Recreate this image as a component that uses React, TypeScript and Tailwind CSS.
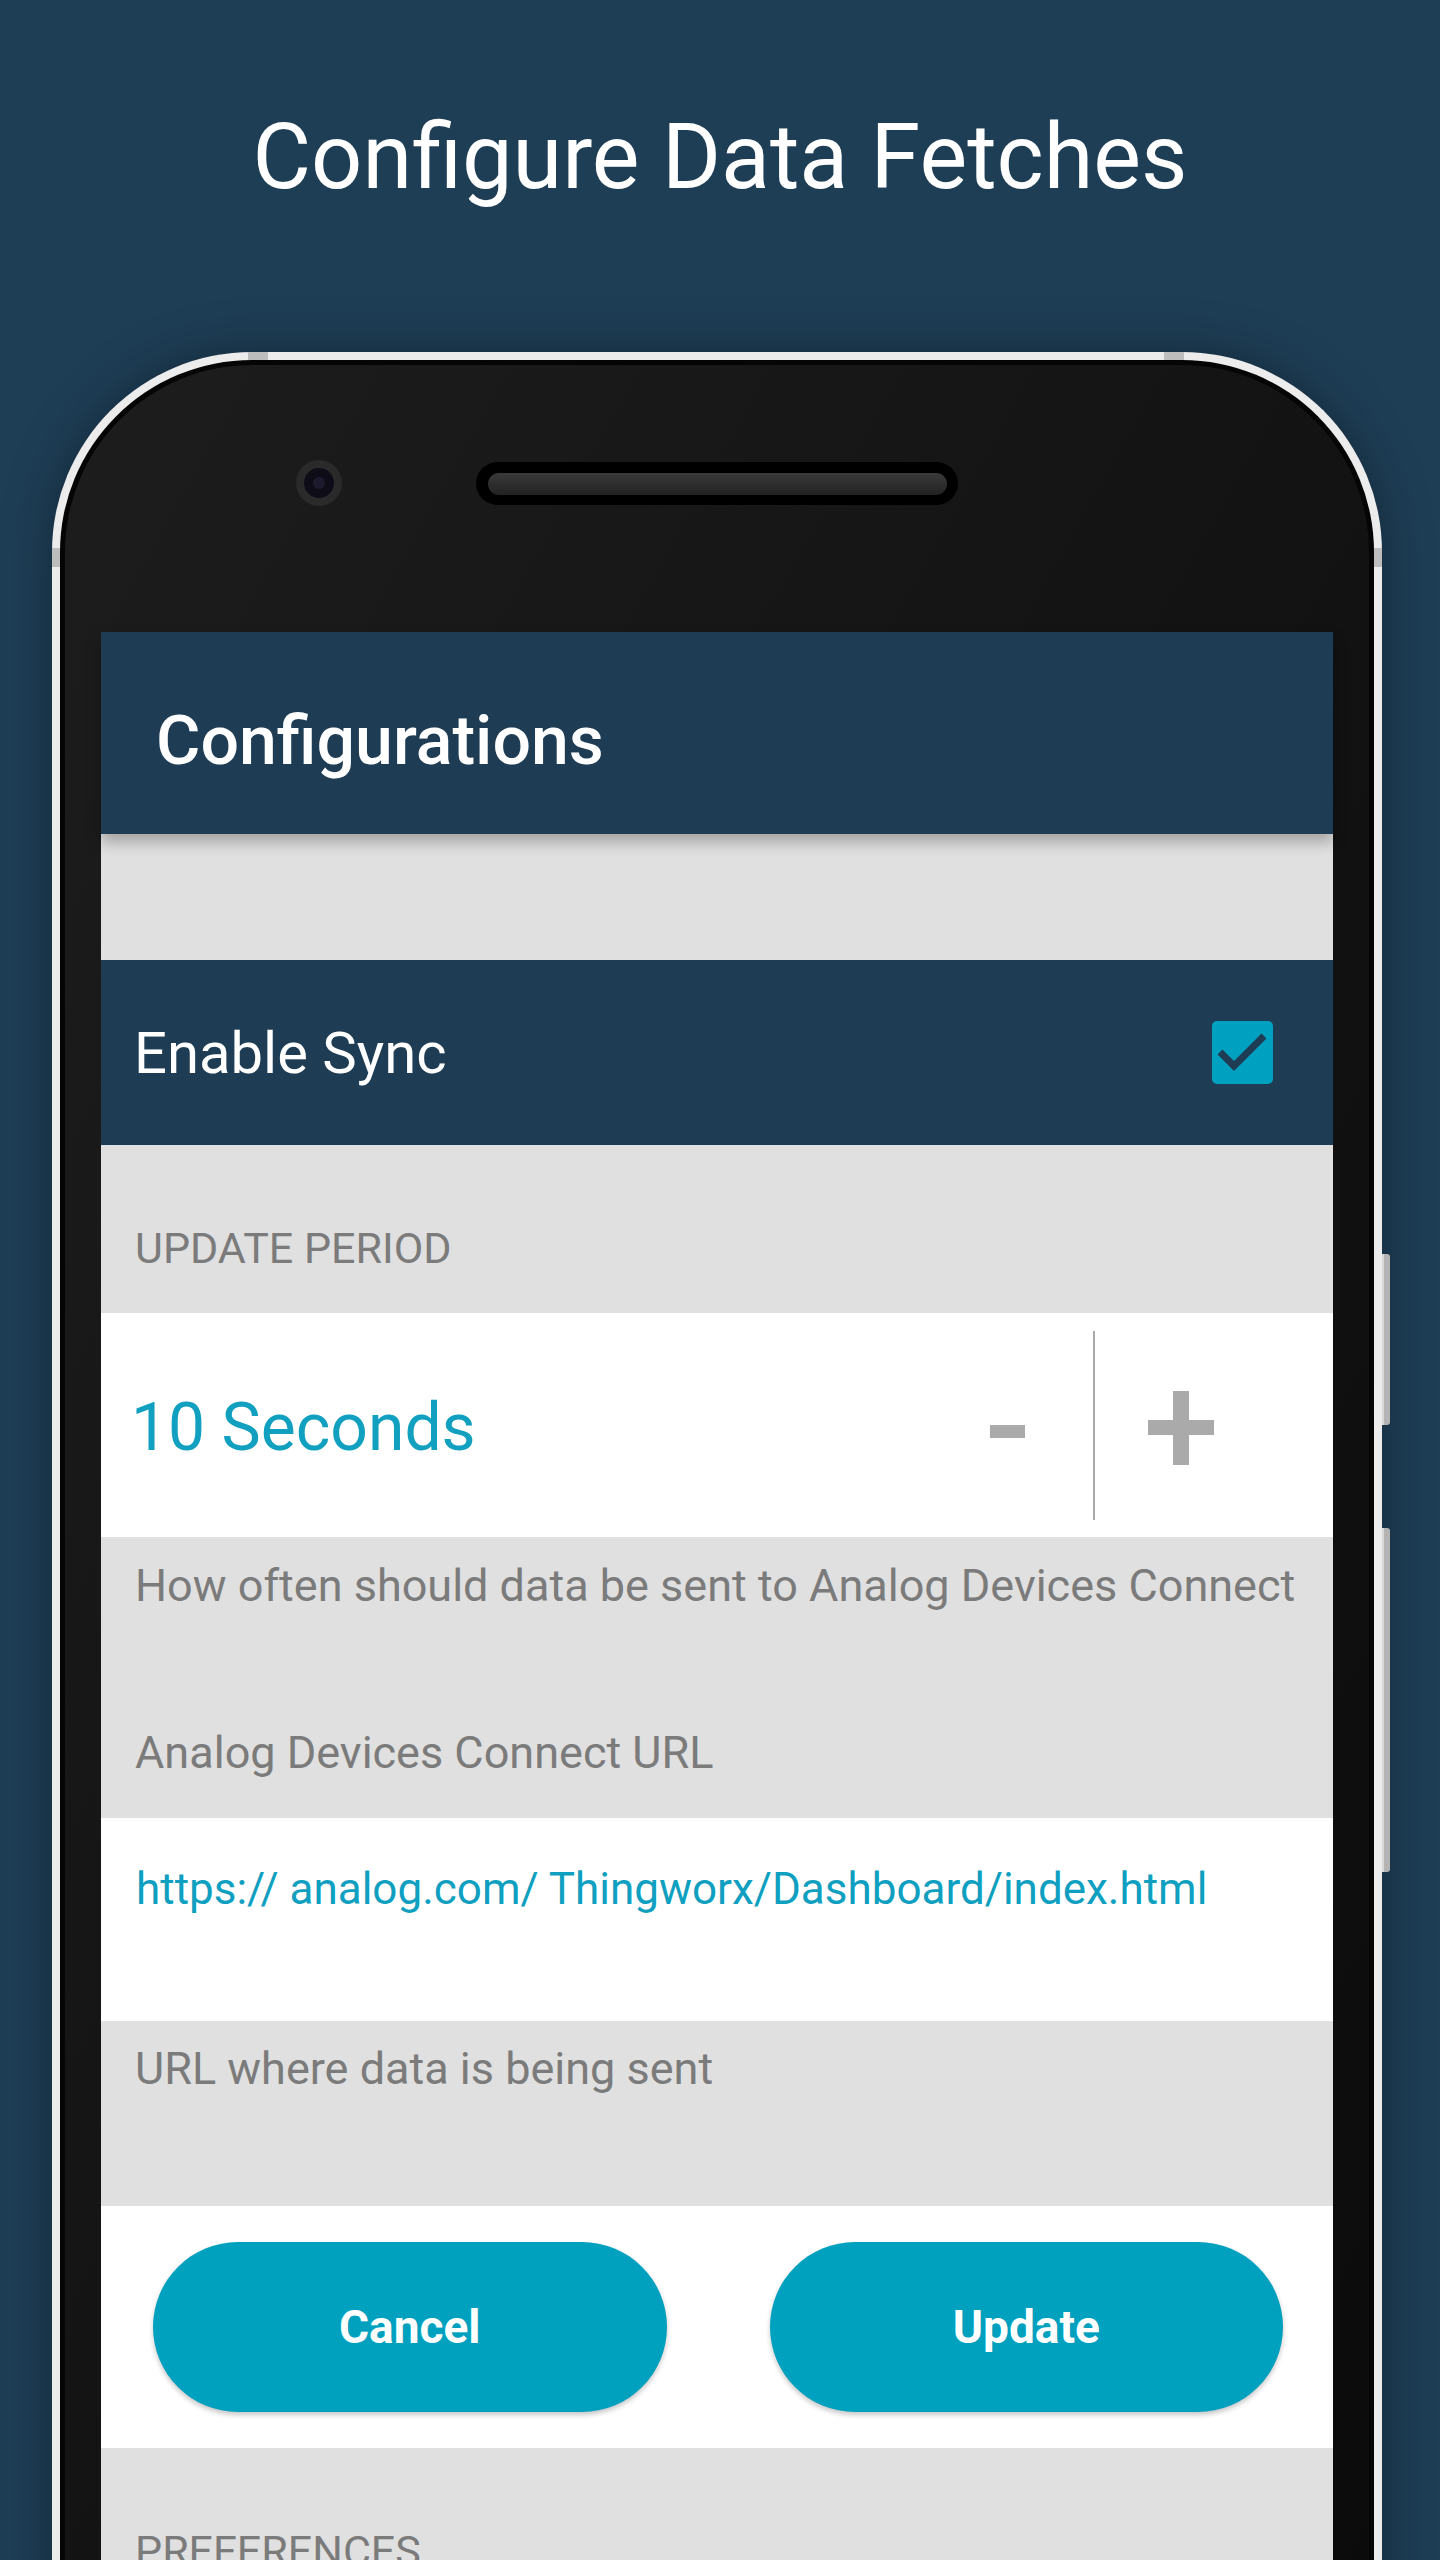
import { FC } from 'react';

const SectionLabel: FC<{ text: string; size?: 'caps' | 'text' }> = ({ text, size = 'text' }) => (
    <div
        className={
            size === 'caps'
                ? 'text-[43px] leading-none text-[#7b7b7b] whitespace-nowrap'
                : 'text-[45px] leading-none text-[#7b7b7b] whitespace-nowrap'
        }
    >
        {text}
    </div>
);

const Checkbox: FC = () => (
    <svg width="61" height="63" viewBox="0 0 61 63">
        <rect x="0" y="0" width="61" height="63" rx="5" fill="#00a0c0" />
        <path d="M8 31 L22 45 L52 15" fill="none" stroke="#1e3d55" strokeWidth="7" />
    </svg>
);

const Stepper: FC = () => (
    <div className="flex items-center h-full">
        <div className="w-[120px] flex items-center justify-center pt-[13px]">
            <div className="w-[35px] h-[13px] bg-[#aaaaaa]" />
        </div>
        <div className="mx-[26px] w-[2px] h-[189px] bg-[#a9a9a9]" />
        <div className="w-[120px] flex items-center justify-center pt-[6px]">
            <svg width="66" height="74" viewBox="0 0 66 74">
                <rect x="0" y="29" width="66" height="15" fill="#aaaaaa" />
                <rect x="25" y="0" width="16" height="74" fill="#aaaaaa" />
            </svg>
        </div>
    </div>
);

const Screen: FC = () => (
    <div className="bg-[#e0e0e0] font-['Roboto',sans-serif]">
        <div className="relative z-10 h-[202px] bg-[#1e3d55] pl-[55px] pt-[75px] shadow-[0_8px_14px_rgba(0,0,0,0.28)]">
            <div className="text-[68px] leading-none font-medium text-white">Configurations</div>
        </div>

        <div className="h-[126px]" />

        <div className="h-[185px] bg-[#1e3d55] flex items-center justify-between pl-[33px] pr-[60px]">
            <div className="text-[58px] leading-none text-white">Enable Sync</div>
            <Checkbox />
        </div>

        <div className="h-[168px] pl-[34px] pt-[82px]">
            <SectionLabel text="UPDATE PERIOD" size="caps" />
        </div>

        <div className="h-[224px] bg-white flex items-center pl-[30px] pr-[92px]">
            <div className="flex-1 text-[66px] leading-none text-[#12a0c0] pt-[6px]">10 Seconds</div>
            <Stepper />
        </div>

        <div className="h-[281px] pl-[34px] pt-[26px]">
            <SectionLabel text="How often should data be sent to Analog Devices Connect" />
            <div className="mt-[122px]">
                <SectionLabel text="Analog Devices Connect URL" />
            </div>
        </div>

        <div className="h-[203px] bg-white pl-[35px] pt-[49px]">
            <div className="text-[44px] leading-none text-[#0f9fc0] whitespace-nowrap">
                https:// analog.com/ Thingworx/Dashboard/index.html
            </div>
        </div>

        <div className="h-[185px] pl-[34px] pt-[25px]">
            <SectionLabel text="URL where data is being sent" />
        </div>

        <div className="h-[242px] bg-white grid grid-cols-2 gap-[103px] pl-[52px] pr-[50px] pt-[36px]">
            <button className="h-[170px] rounded-full bg-[#00a0bf] text-white text-[46px] font-bold leading-none shadow-[0_3px_5px_rgba(0,0,0,0.22)]">
                Cancel
            </button>
            <button className="h-[170px] rounded-full bg-[#00a0bf] text-white text-[46px] font-bold leading-none shadow-[0_3px_5px_rgba(0,0,0,0.22)]">
                Update
            </button>
        </div>

        <div className="h-[220px] pl-[34px] pt-[82px]">
            <SectionLabel text="PREFERENCES" size="caps" />
        </div>
    </div>
);

const Phone: FC = () => (
    <div className="relative ml-[52px] w-[1330px] rounded-t-[200px] border-[8px] border-b-0 border-[#ececec] bg-[#ececec] shadow-[0_0_50px_rgba(0,0,0,0.35)]">
        {/* antenna bands on the rim */}
        <div className="absolute -top-[8px] left-[188px] w-[20px] h-[8px] bg-[#bdbdbd]" />
        <div className="absolute -top-[8px] left-[1104px] w-[20px] h-[8px] bg-[#bdbdbd]" />
        <div className="absolute top-[188px] -left-[8px] w-[8px] h-[19px] bg-[#bdbdbd]" />
        <div className="absolute top-[188px] -right-[8px] w-[8px] h-[19px] bg-[#bdbdbd]" />

        {/* side keys */}
        <div className="absolute -right-[16px] top-[894px] w-[8px] h-[171px] rounded-r-[3px] bg-[#b4b4b4] border-l-2 border-[#d8d8d8]" />
        <div className="absolute -right-[16px] top-[1168px] w-[8px] h-[344px] rounded-r-[3px] bg-[#b4b4b4] border-l-2 border-[#d8d8d8]" />

        <div className="rounded-t-[192px] border-[5px] border-b-0 border-[#050505] bg-gradient-to-br from-[#1d1d1d] via-[#131313] to-[#0b0b0b] px-[36px]">
            <div className="h-[267px] flex items-start pt-[95px]">
                <div className="ml-[195px] w-[46px] h-[46px] rounded-full bg-[#2a2a2a] flex items-center justify-center">
                    <div className="w-[30px] h-[30px] rounded-full bg-[#0e0c16] flex items-center justify-center">
                        <div className="w-[12px] h-[12px] rounded-full bg-[#1d1a2e]" />
                    </div>
                </div>
                <div className="ml-[134px] mt-[2px] w-[482px] h-[43px] rounded-full bg-black flex items-center justify-center">
                    <div className="w-[459px] h-[22px] rounded-full bg-gradient-to-b from-[#3a3a3a] to-[#222222]" />
                </div>
            </div>
            <Screen />
        </div>
    </div>
);

export default function App() {
    return (
        <div className="h-[2560px] overflow-hidden bg-[#1e3e56] pt-[113px]">
            <h1 className="text-center text-[90px] leading-none text-white font-['Roboto',sans-serif]">
                Configure Data Fetches
            </h1>
            <div className="mt-[149px]">
                <Phone />
            </div>
        </div>
    );
}
